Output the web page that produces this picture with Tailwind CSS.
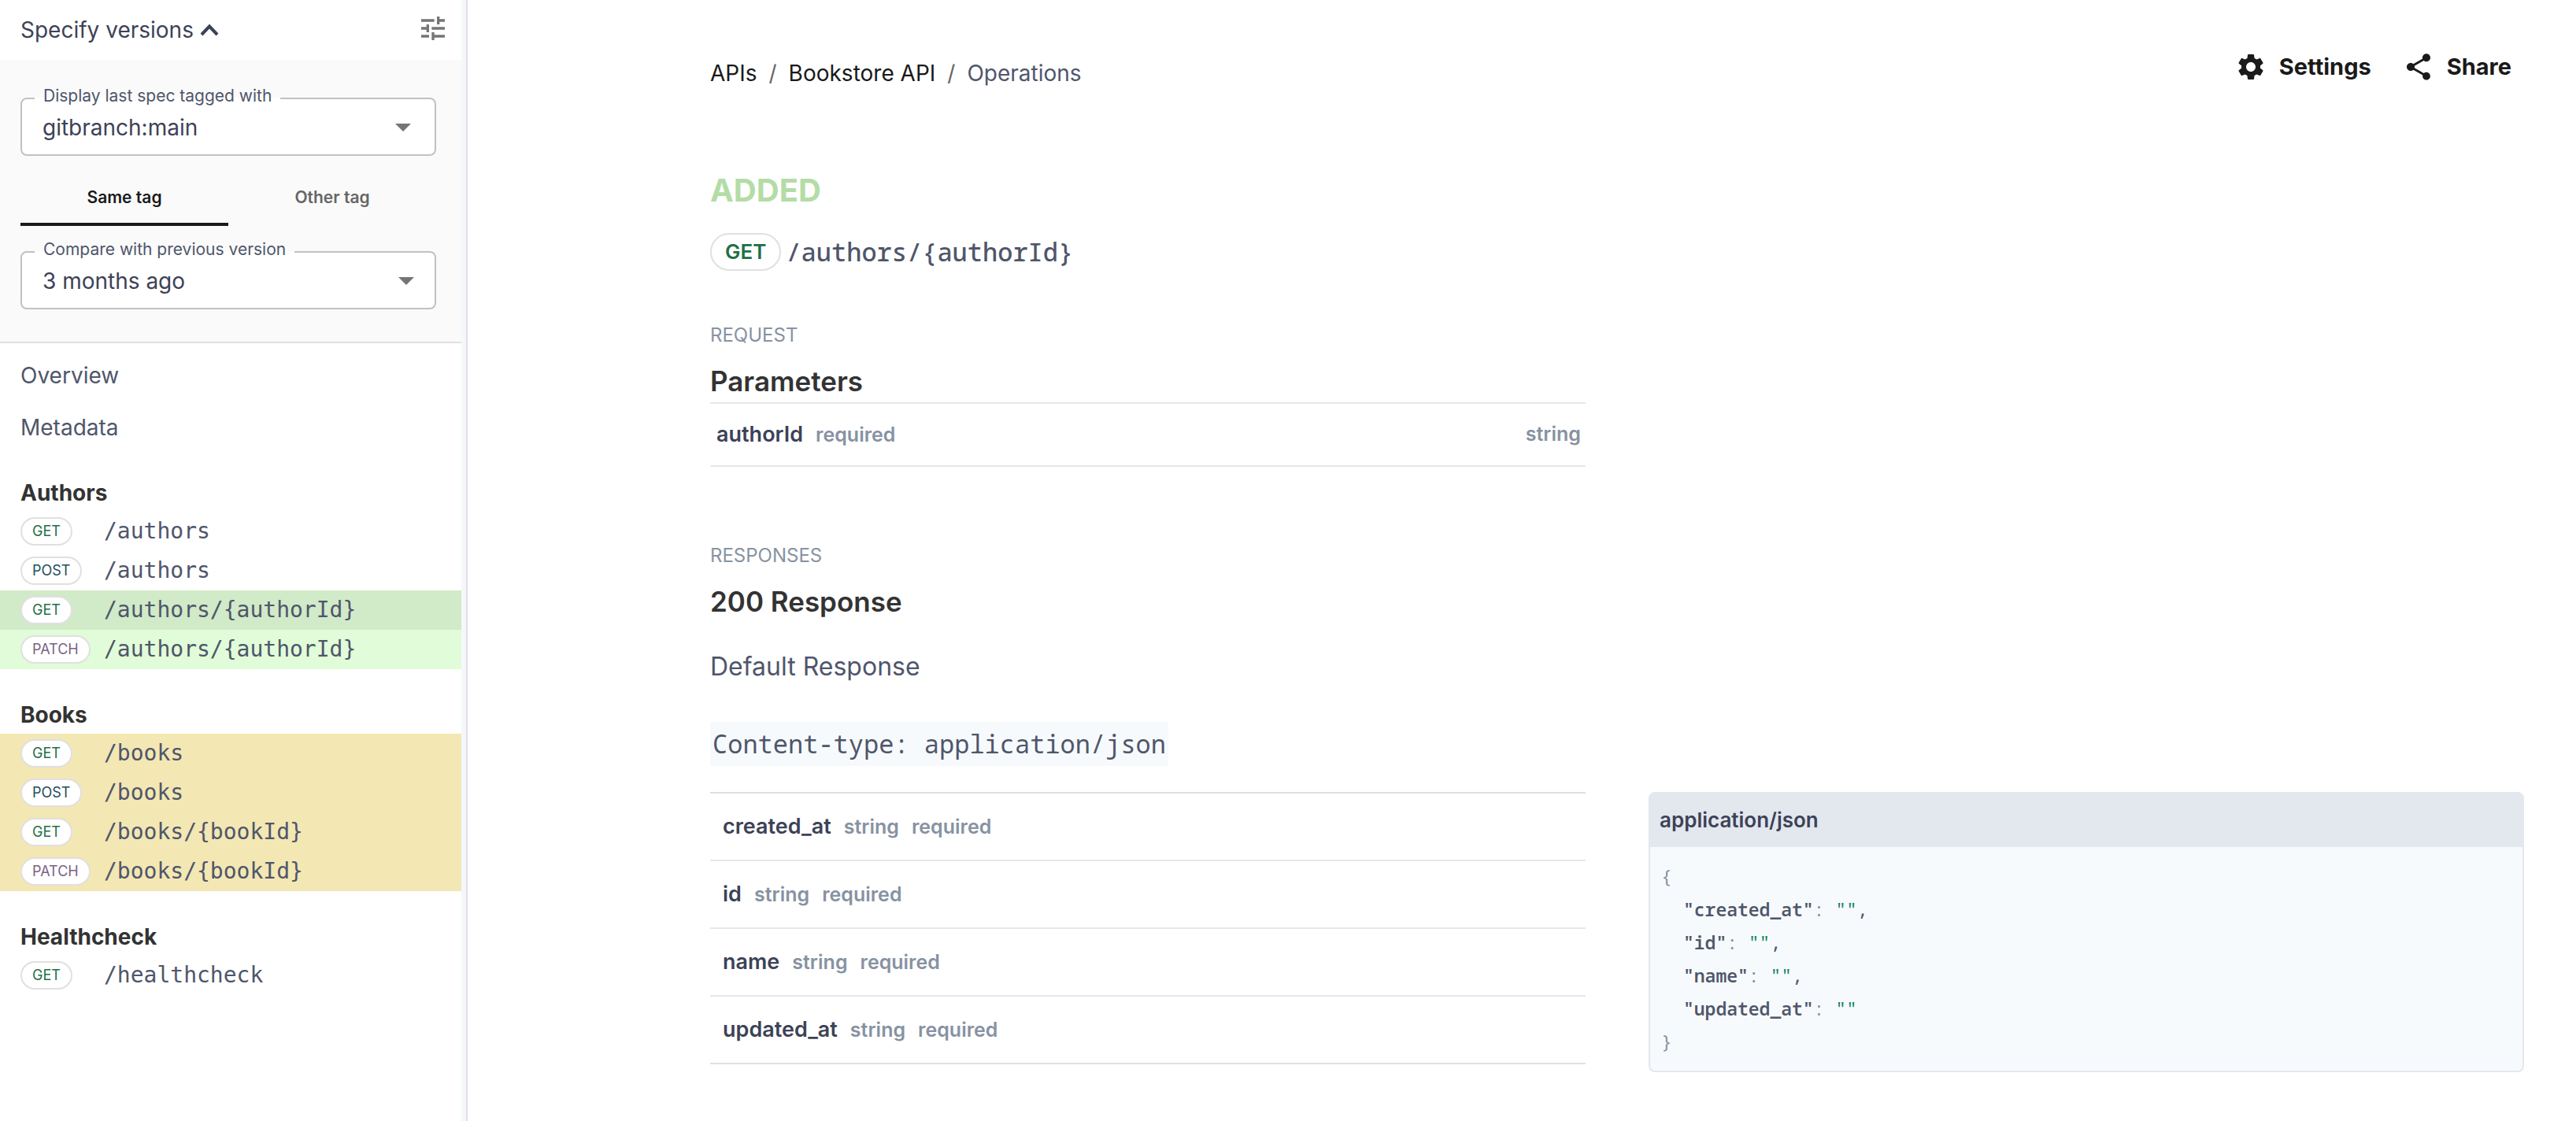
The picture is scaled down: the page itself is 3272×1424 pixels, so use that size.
<!DOCTYPE html>
<html lang="en">
<head>
<meta charset="utf-8">
<title>Bookstore API</title>
<script src="https://cdn.jsdelivr.net/npm/@tailwindcss/browser@4"></script>
</head>
<body class="bg-white font-['Inter',sans-serif] text-[28px] text-[#4f566b]">
<div class="flex min-h-screen">

  <!-- Sidebar -->
  <aside class="flex w-[594px] shrink-0 border-r-2 border-[#dfe0e2] bg-[#f4f8fb] pr-1.5">
    <div class="w-full bg-white">
      <div class="flex h-[76px] items-center justify-between pr-4 pl-[26px]">
        <button type="button" class="flex items-center gap-2 leading-10 text-[#3c4257]">Specify versions
          <svg class="h-4 w-6" viewBox="0 0 24 16" fill="none" stroke="currentColor" stroke-width="4" aria-hidden="true"><path d="M2 14 12 3.500l10 10.500"/></svg>
        </button>
        <button type="button" aria-label="Tune" class="-mt-1">
          <svg class="size-10" viewBox="0 0 24 24" fill="#757575" aria-hidden="true"><path d="M3 17v2h6v-2H3zM3 5v2h10V5H3zm10 16v-2h8v-2h-8v-2h-2v6h2zM7 9v2H3v2h4v2h2V9H7zm14 4v-2H11v2h10zm-6-4h2V7h4V5h-4V3h-2v6z"/></svg>
        </button>
      </div>

      <div class="border-b-2 border-[#e0e0e0] bg-[#fafafa] pt-[34px] pr-8 pb-[41px] pl-[26px]">
        <fieldset class="h-[88px] rounded-lg border-2 border-[#c1c1c1] bg-white">
          <legend class="ml-4 px-[11px] pb-1.5 text-[21px] leading-6"><label for="tag">Display last spec tagged with</label></legend>
          <div class="relative">
            <select id="tag" class="h-11 w-full appearance-none bg-transparent pl-[26px] text-[#3c4257]"><option>gitbranch:main</option></select>
            <svg class="pointer-events-none absolute top-[17px] right-[30px] h-2.5 w-5" viewBox="0 0 20 10" fill="#757575" aria-hidden="true"><path d="M0 0h20L10 10z"/></svg>
          </div>
        </fieldset>
        <div role="tablist" class="mt-4 mb-[18px] grid grid-cols-2 text-[21px] font-semibold">
          <button type="button" role="tab" aria-selected="true" class="h-[73px] border-b-4 border-[#1a1a1a] pt-1 text-[#1a1a1a]">Same tag</button>
          <button type="button" role="tab" aria-selected="false" class="h-[73px] border-b-4 border-transparent pt-1 text-[#666]">Other tag</button>
        </div>
        <fieldset class="h-[88px] rounded-lg border-2 border-[#c1c1c1] bg-white">
          <legend class="ml-4 px-[11px] pb-1.5 text-[21px] leading-6"><label for="prev">Compare with previous version</label></legend>
          <div class="relative">
            <select id="prev" class="h-11 w-full appearance-none bg-transparent pl-[26px] text-[#3c4257]"><option>3 months ago</option></select>
            <svg class="pointer-events-none absolute top-[17px] right-[26px] h-2.5 w-5" viewBox="0 0 20 10" fill="#757575" aria-hidden="true"><path d="M0 0h20L10 10z"/></svg>
          </div>
        </fieldset>
      </div>

      <nav class="pt-2">
        <a href="#overview" class="block px-[26px] leading-[66px]">Overview</a>
        <a href="#metadata" class="block px-[26px] leading-[66px]">Metadata</a>

        <h2 class="px-[26px] pt-[30px] pb-1 leading-10 font-bold text-[#333]">Authors</h2>
        <ul class="font-['DejaVu_Sans_Mono',monospace]">
          <li><a href="#a1" class="flex h-[50px] items-center pl-[26px]"><span class="w-[106px]"><span class="block h-9 w-fit rounded-full border-2 border-[#e0e0e0] bg-white px-[13px] font-['Inter',sans-serif] text-lg leading-8 text-[#1f6f47]">GET</span></span>/authors</a></li>
          <li><a href="#a2" class="flex h-[50px] items-center pl-[26px]"><span class="w-[106px]"><span class="block h-9 w-fit rounded-full border-2 border-[#e0e0e0] bg-white px-[13px] font-['Inter',sans-serif] text-lg leading-8 text-[#234e5c]">POST</span></span>/authors</a></li>
          <li><a href="#a3" class="flex h-[50px] items-center bg-[#d1eac8] pl-[26px]"><span class="w-[106px]"><span class="block h-9 w-fit rounded-full border-2 border-[#e0e0e0] bg-white px-[13px] font-['Inter',sans-serif] text-lg leading-8 text-[#1f6f47]">GET</span></span>/authors/{authorId}</a></li>
          <li><a href="#a4" class="flex h-[50px] items-center bg-[#e1fcd8] pl-[26px]"><span class="w-[106px]"><span class="block h-9 w-fit rounded-full border-2 border-[#e0e0e0] bg-white px-[13px] font-['Inter',sans-serif] text-lg leading-8 text-[#7a6384]">PATCH</span></span>/authors/{authorId}</a></li>
        </ul>

        <h2 class="px-[26px] pt-[38px] pb-1 leading-10 font-bold text-[#333]">Books</h2>
        <ul class="bg-[#f3e7b3] font-['DejaVu_Sans_Mono',monospace]">
          <li><a href="#b1" class="flex h-[50px] items-center pl-[26px]"><span class="w-[106px]"><span class="block h-9 w-fit rounded-full border-2 border-[#e0e0e0] bg-white px-[13px] font-['Inter',sans-serif] text-lg leading-8 text-[#1f6f47]">GET</span></span>/books</a></li>
          <li><a href="#b2" class="flex h-[50px] items-center pl-[26px]"><span class="w-[106px]"><span class="block h-9 w-fit rounded-full border-2 border-[#e0e0e0] bg-white px-[13px] font-['Inter',sans-serif] text-lg leading-8 text-[#234e5c]">POST</span></span>/books</a></li>
          <li><a href="#b3" class="flex h-[50px] items-center pl-[26px]"><span class="w-[106px]"><span class="block h-9 w-fit rounded-full border-2 border-[#e0e0e0] bg-white px-[13px] font-['Inter',sans-serif] text-lg leading-8 text-[#1f6f47]">GET</span></span>/books/{bookId}</a></li>
          <li><a href="#b4" class="flex h-[50px] items-center pl-[26px]"><span class="w-[106px]"><span class="block h-9 w-fit rounded-full border-2 border-[#e0e0e0] bg-white px-[13px] font-['Inter',sans-serif] text-lg leading-8 text-[#7a6384]">PATCH</span></span>/books/{bookId}</a></li>
        </ul>

        <h2 class="px-[26px] pt-[38px] pb-1 leading-10 font-bold text-[#333]">Healthcheck</h2>
        <ul class="font-['DejaVu_Sans_Mono',monospace]">
          <li><a href="#h1" class="flex h-[50px] items-center pl-[26px]"><span class="w-[106px]"><span class="block h-9 w-fit rounded-full border-2 border-[#e0e0e0] bg-white px-[13px] font-['Inter',sans-serif] text-lg leading-8 text-[#1f6f47]">GET</span></span>/healthcheck</a></li>
        </ul>
      </nav>
    </div>
  </aside>

  <!-- Main -->
  <main class="min-w-0 flex-1 pr-[66px] pl-[308px]">
    <header class="flex items-start justify-between pt-[65px]">
      <nav aria-label="Breadcrumb" class="flex gap-[15px] pt-2 leading-10 text-[#1a1a1a]">
        <a href="#apis">APIs</a><span class="text-[#666]">/</span><a href="#bookstore">Bookstore API</a><span class="text-[#666]">/</span><span class="text-[#4f566b]">Operations</span>
      </nav>
      <div class="flex gap-10 pr-4 text-[29px] leading-10 font-bold text-[#1a1a1a]">
        <button type="button" class="flex items-center gap-4">
          <svg class="size-10" viewBox="0 0 24 24" fill="currentColor" aria-hidden="true"><path d="M19.140 12.940c.04-.3.06-.61.06-.94 0-.32-.02-.64-.07-.94l2.030-1.580c.18-.14.23-.41.12-.61l-1.920-3.320c-.12-.22-.37-.29-.59-.22l-2.390.96c-.5-.38-1.030-.7-1.620-.94l-.36-2.540c-.04-.24-.24-.41-.48-.41h-3.840c-.24 0-.43.17-.47.41l-.36 2.540c-.59.24-1.130.57-1.620.94l-2.390-.96c-.22-.08-.47 0-.59.22L2.740 8.870c-.12.21-.08.47.12.61l2.030 1.580c-.05.3-.09.63-.09.94s.02.64.07.94l-2.030 1.580c-.18.14-.23.41-.12.61l1.920 3.320c.12.22.37.29.59.22l2.390-.96c.5.38 1.030.7 1.620.94l.36 2.540c.05.24.24.41.48.41h3.840c.24 0 .44-.17.47-.41l.36-2.540c.59-.24 1.130-.56 1.620-.94l2.390.96c.22.08.47 0 .59-.22l1.920-3.320c.12-.22.07-.47-.12-.61l-2.010-1.580zM12 15.600c-1.980 0-3.600-1.620-3.600-3.600s1.620-3.600 3.600-3.600 3.600 1.620 3.600 3.600-1.620 3.600-3.600 3.600z"/></svg>Settings
        </button>
        <button type="button" class="flex items-center gap-4">
          <svg class="size-10" viewBox="0 0 24 24" fill="currentColor" aria-hidden="true"><path d="M18 16.080c-.76 0-1.440.3-1.960.77L8.910 12.700c.05-.23.09-.46.09-.7s-.04-.47-.09-.7l7.050-4.110c.54.5 1.250.81 2.040.81 1.660 0 3-1.340 3-3s-1.340-3-3-3-3 1.340-3 3c0 .24.04.47.09.7L8.040 9.810C7.500 9.310 6.790 9 6 9c-1.660 0-3 1.340-3 3s1.340 3 3 3c.79 0 1.500-.31 2.040-.81l7.120 4.160c-.05.21-.08.43-.08.65 0 1.610 1.310 2.920 2.920 2.920 1.610 0 2.920-1.310 2.920-2.920s-1.310-2.920-2.920-2.920z"/></svg>Share
        </button>
      </div>
    </header>

    <div class="grid grid-cols-2 gap-x-20">
      <div>
        <p class="pt-[105px] text-[40px] leading-12 font-bold text-[#b4dca6]">ADDED</p>
        <h1 class="mt-[30px] flex items-center gap-1.5 text-[32px] leading-12 font-semibold">
          <span class="h-12 rounded-full border-2 border-[#e0e0e0] px-[17px] text-[26px] leading-11 font-semibold text-[#1f6f47]">GET</span>
          <span class="font-['Noto_Sans_Mono','DejaVu_Sans_Mono',monospace] font-medium">/authors/{authorId}</span>
        </h1>

        <h2 class="mt-[66px] text-2xl leading-8 text-[#8792a2]">REQUEST</h2>
        <h3 class="mt-[18px] text-[35px] leading-12 font-semibold text-[#333]">Parameters</h3>
        <table class="mt-[3px] w-full border-y-2 border-[#e3e8ee]">
          <tr class="h-20 text-[25px] font-semibold text-[#8792a2]">
            <td class="pl-2"><span class="mr-4 text-[27px] text-[#3c4257]">authorId</span>required</td>
            <td class="pr-1.5 text-right">string</td>
          </tr>
        </table>

        <h2 class="mt-[97px] text-2xl leading-8 text-[#8792a2]">RESPONSES</h2>
        <h3 class="mt-[18px] text-[35px] leading-12 font-semibold text-[#333]">200 Response</h3>
        <p class="mt-[35px] text-[32px] leading-12">Default Response</p>
        <p class="mt-[46px] flex text-[32px] leading-14"><code class="bg-[#f7fafc] px-[3px] font-['Noto_Sans_Mono','DejaVu_Sans_Mono',monospace]">Content-type: application/json</code></p>
      </div>
    </div>

    <div class="mt-[33px] grid grid-cols-2 items-start gap-x-20 pb-14">
      <table class="w-full border-y-2 border-[#e0e0e0] text-[25px] font-semibold text-[#8792a2]">
        <tr class="h-[86px] border-b-2 border-[#e3e8ee]"><td class="pl-4"><span class="mr-4 text-[27px] text-[#3c4257]">created_at</span><span class="mr-4">string</span>required</td></tr>
        <tr class="h-[86px] border-b-2 border-[#e3e8ee]"><td class="pl-4"><span class="mr-4 text-[27px] text-[#3c4257]">id</span><span class="mr-4">string</span>required</td></tr>
        <tr class="h-[86px] border-b-2 border-[#e3e8ee]"><td class="pl-4"><span class="mr-4 text-[27px] text-[#3c4257]">name</span><span class="mr-4">string</span>required</td></tr>
        <tr class="h-[86px]"><td class="pl-4"><span class="mr-4 text-[27px] text-[#3c4257]">updated_at</span><span class="mr-4">string</span>required</td></tr>
      </table>

      <section class="overflow-hidden rounded-lg border-2 border-[#e3e7ee] bg-[#f7fafc]">
        <h4 class="bg-[#e3e7ee] px-3 py-1.5 text-[26px] leading-14 font-semibold text-[#3c4257]">application/json</h4>
        <div class="px-3.5 py-4 font-['Noto_Sans_Mono','DejaVu_Sans_Mono',monospace] text-[23px] leading-[42px]">
          <div class="text-[#8792a2]">{</div>
          <div class="pl-7"><span class="font-semibold">"created_at"</span><span class="text-[#8792a2]">: </span><span class="text-[#09825d]">""</span>,</div>
          <div class="pl-7"><span class="font-semibold">"id"</span><span class="text-[#8792a2]">: </span><span class="text-[#09825d]">""</span>,</div>
          <div class="pl-7"><span class="font-semibold">"name"</span><span class="text-[#8792a2]">: </span><span class="text-[#09825d]">""</span>,</div>
          <div class="pl-7"><span class="font-semibold">"updated_at"</span><span class="text-[#8792a2]">: </span><span class="text-[#09825d]">""</span></div>
          <div class="text-[#8792a2]">}</div>
        </div>
      </section>
    </div>
  </main>
</div>
</body>
</html>
